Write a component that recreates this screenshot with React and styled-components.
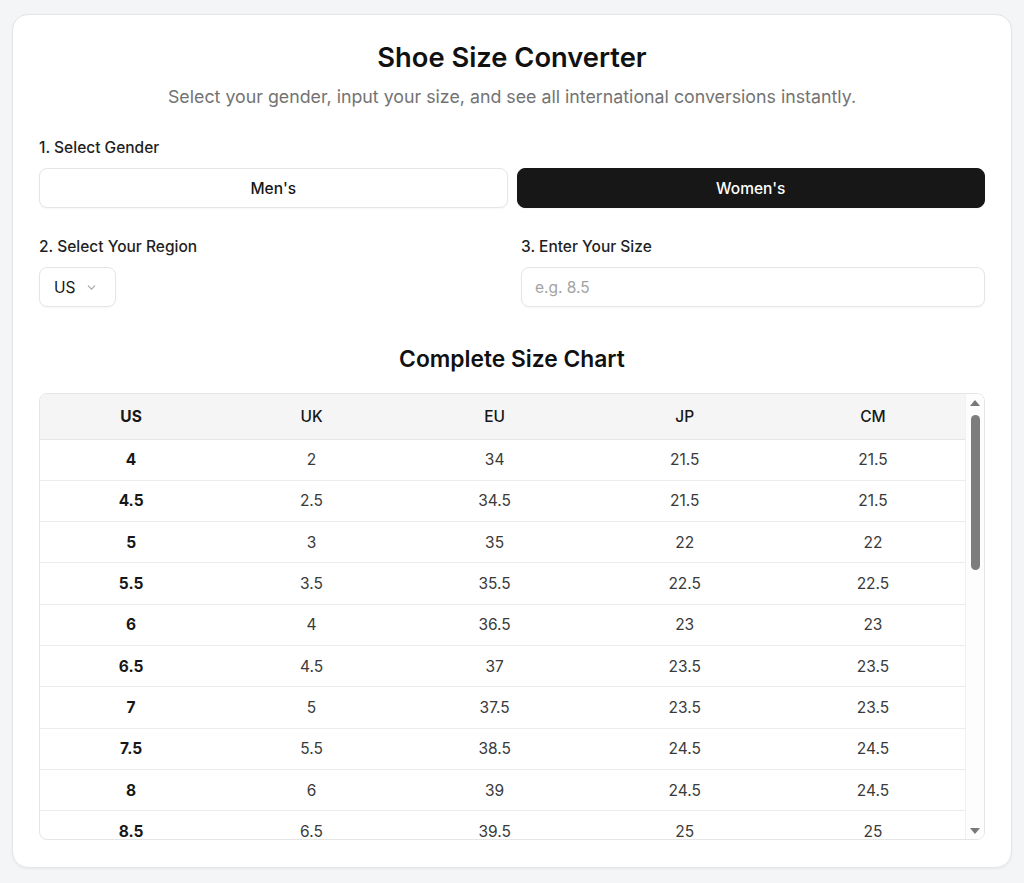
import React, { useState } from 'react';
import styled, { createGlobalStyle } from 'styled-components';

const GlobalStyle = createGlobalStyle`
    * { box-sizing: border-box; }
    body {
        margin: 0;
        background: #f4f5f7;
        font-family: Inter, "Noto Sans", "Liberation Sans", sans-serif;
        color: #111;
    }
`;

const WOMENS = [
    ['4', '2', '34', '21.5', '21.5'],
    ['4.5', '2.5', '34.5', '21.5', '21.5'],
    ['5', '3', '35', '22', '22'],
    ['5.5', '3.5', '35.5', '22.5', '22.5'],
    ['6', '4', '36.5', '23', '23'],
    ['6.5', '4.5', '37', '23.5', '23.5'],
    ['7', '5', '37.5', '23.5', '23.5'],
    ['7.5', '5.5', '38.5', '24.5', '24.5'],
    ['8', '6', '39', '24.5', '24.5'],
    ['8.5', '6.5', '39.5', '25', '25'],
    ['9', '7', '40', '25.5', '25.5'],
    ['9.5', '7.5', '40.5', '25.5', '25.5'],
    ['10', '8', '41', '26', '26'],
    ['10.5', '8.5', '42', '26.5', '26.5'],
    ['11', '9', '42.5', '27', '27'],
    ['11.5', '9.5', '43', '27.5', '27.5'],
    ['12', '10', '44', '28', '28'],
    ['12.5', '10.5', '44.5', '28.5', '28.5'],
    ['13', '11', '45', '29', '29'],
    ['13.5', '11.5', '45.5', '29.5', '29.5'],
    ['14', '12', '46', '30', '30'],
    ['14.5', '12.5', '46.5', '30.5', '30.5'],
    ['15', '13', '47', '31', '31'],
    ['15.5', '13.5', '47.5', '31.5', '31.5'],
    ['16', '14', '48', '32', '32'],
    ['16.5', '14.5', '48.5', '32.5', '32.5'],
    ['17', '15', '49', '33', '33'],
    ['17.5', '15.5', '49.5', '33.5', '33.5'],
];

const REGIONS = ['US', 'UK', 'EU', 'JP', 'CM'];
const COL_WIDTHS = ['19.7%', '19.3%', '20.3%', '20.8%', '19.9%'];

export default function App() {
    const [gender, setGender] = useState('women');
    const [region] = useState('US');
    const regionIndex = REGIONS.indexOf(region);

    return (
        <Page>
            <GlobalStyle />
            <Card>
                <Title>Shoe Size Converter</Title>
                <Subtitle>Select your gender, input your size, and see all international conversions instantly.</Subtitle>

                <Label>1. Select Gender</Label>
                <GenderRow>
                    <GenderButton active={gender === 'men'} onClick={() => setGender('men')}>Men's</GenderButton>
                    <GenderButton active={gender === 'women'} onClick={() => setGender('women')}>Women's</GenderButton>
                </GenderRow>

                <FieldsRow>
                    <Field>
                        <Label>2. Select Your Region</Label>
                        <RegionSelect>
                            <span>{region}</span>
                            <svg width="13" height="13" viewBox="0 0 24 24" fill="none" stroke="#a3a3a3" strokeWidth="2" strokeLinecap="round" strokeLinejoin="round">
                                <path d="m6 9 6 6 6-6" />
                            </svg>
                        </RegionSelect>
                    </Field>
                    <Field>
                        <Label>3. Enter Your Size</Label>
                        <SizeInput placeholder="e.g. 8.5" />
                    </Field>
                </FieldsRow>

                <ChartTitle>Complete Size Chart</ChartTitle>
                <TableFrame>
                    <ScrollArea>
                        <Table>
                            <colgroup>
                                {COL_WIDTHS.map((w, i) => <col key={i} style={{ width: w }} />)}
                            </colgroup>
                            <thead>
                                <tr>
                                    {REGIONS.map((r, i) => (
                                        <Th key={r} selected={i === regionIndex}>{r}</Th>
                                    ))}
                                </tr>
                            </thead>
                            <tbody>
                                {WOMENS.map((row) => (
                                    <tr key={row[0]}>
                                        {row.map((v, i) => (
                                            <Td key={i} selected={i === regionIndex}>{v}</Td>
                                        ))}
                                    </tr>
                                ))}
                            </tbody>
                        </Table>
                    </ScrollArea>
                    <ScrollRail>
                        <Arrow dir="up" />
                        <Track>
                            <Thumb />
                        </Track>
                        <Arrow dir="down" />
                    </ScrollRail>
                </TableFrame>
            </Card>
        </Page>
    );
}

const Page = styled.div`
    padding: 14px 12px 16px;
`;

const Card = styled.div`
    background: #fff;
    border: 1px solid #e3e5e8;
    border-radius: 16px;
    box-shadow: 0 1px 3px rgba(0, 0, 0, 0.05);
    padding: 27px 26px 27px;
`;

const Title = styled.h1`
    margin: 0;
    text-align: center;
    font-size: 27.3px;
    line-height: 32px;
    font-weight: 600;
    color: #111;
`;

const Subtitle = styled.p`
    margin: 11px 0 29px;
    text-align: center;
    font-size: 17.8px;
    line-height: 24px;
    color: #737373;
`;

const Label = styled.div`
    font-size: 15.5px;
    line-height: 20px;
    font-weight: 500;
    color: #1f1f1f;
    margin-bottom: 10px;
`;

const GenderRow = styled.div`
    display: grid;
    grid-template-columns: 1fr 1fr;
    gap: 9px;
    margin-bottom: 29px;
`;

const GenderButton = styled.button`
    height: 40px;
    border-radius: 8px;
    font-family: inherit;
    font-size: 15.5px;
    font-weight: 500;
    cursor: pointer;
    border: 1px solid ${(p) => (p.active ? '#171717' : '#e5e5e5')};
    background: ${(p) => (p.active ? '#171717' : '#fff')};
    color: ${(p) => (p.active ? '#fff' : '#171717')};
    box-shadow: 0 1px 2px rgba(0, 0, 0, 0.04);
`;

const FieldsRow = styled.div`
    display: grid;
    grid-template-columns: 1fr 1fr;
    gap: 18px;
    margin-bottom: 38px;
`;

const Field = styled.div`
    display: flex;
    flex-direction: column;
    align-items: flex-start;
`;

const RegionSelect = styled.div`
    height: 40px;
    width: 77px;
    display: flex;
    align-items: center;
    gap: 10px;
    padding: 0 12px 0 14px;
    border: 1px solid #e5e5e5;
    border-radius: 8px;
    font-size: 15.5px;
    color: #171717;
    box-shadow: 0 1px 2px rgba(0, 0, 0, 0.04);
`;

const SizeInput = styled.input`
    width: 100%;
    height: 40px;
    padding: 0 13px;
    border: 1px solid #e5e5e5;
    border-radius: 8px;
    font-family: inherit;
    font-size: 15.5px;
    color: #171717;
    outline: none;
    box-shadow: 0 1px 2px rgba(0, 0, 0, 0.04);
    &::placeholder {
        color: #a3a3a3;
    }
`;

const ChartTitle = styled.h2`
    margin: 0 0 20px;
    text-align: center;
    font-size: 22.8px;
    line-height: 28px;
    font-weight: 600;
    color: #111;
`;

const TableFrame = styled.div`
    height: 447px;
    display: flex;
    border: 1px solid #e5e5e5;
    border-radius: 8px;
    overflow: hidden;
`;

const ScrollArea = styled.div`
    flex: 1;
    overflow-y: auto;
    scrollbar-width: none;
    &::-webkit-scrollbar {
        display: none;
    }
`;

const ScrollRail = styled.div`
    width: 19px;
    flex-shrink: 0;
    background: #fdfdfd;
    border-left: 1px solid #f1f1f1;
    display: flex;
    flex-direction: column;
    align-items: center;
    padding: 6px 0 5px;
`;

const Arrow = styled.div`
    width: 0;
    height: 0;
    border-left: 5px solid transparent;
    border-right: 5px solid transparent;
    ${(p) => (p.dir === 'up'
        ? 'border-bottom: 6px solid #777;'
        : 'border-top: 6px solid #777;')}
`;

const Track = styled.div`
    flex: 1;
    width: 100%;
    display: flex;
    justify-content: center;
    padding-top: 9px;
`;

const Thumb = styled.div`
    width: 9px;
    height: 155px;
    border-radius: 5px;
    background: #7d7d7d;
`;

const Table = styled.table`
    width: 100%;
    border-collapse: collapse;
    table-layout: fixed;
    font-size: 15.5px;
`;

const Th = styled.th`
    position: sticky;
    top: 0;
    background: #f5f5f5;
    height: 45px;
    font-weight: ${(p) => (p.selected ? 700 : 500)};
    color: #171717;
    text-align: center;
    border-bottom: 1px solid #e5e5e5;
`;

const Td = styled.td`
    height: 41.3px;
    text-align: center;
    font-weight: ${(p) => (p.selected ? 700 : 400)};
    color: ${(p) => (p.selected ? '#171717' : '#3a3a3a')};
    border-bottom: 1px solid #ececec;
`;
